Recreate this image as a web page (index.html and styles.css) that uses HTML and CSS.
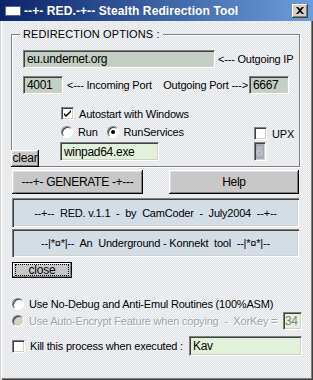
FILE: index.html
```html
<!DOCTYPE html>
<html>
<head>
<meta charset="utf-8">
<link rel="stylesheet" href="styles.css">
</head>
<body>
<div class="window">
  <div class="titlebar">
    <span class="ticon"></span>
    <span class="ttext">--+- RED.-+-- Stealth Redirection Tool</span>
    <span class="tclose"><svg width="8" height="7" viewBox="0 0 8 7"><path d="M0 0h2l2 2 2-2h2L5 3.5 8 7H6L4 5 2 7H0l3-3.5z" fill="#000"/></svg></span>
  </div>
  <div class="client">
    <div class="group">
      <span class="legend">REDIRECTION OPTIONS :</span>
      <div class="row r-ip">
        <div class="field gg ip">eu.undernet.org</div>
        <span class="lbl-ip">&lt;--- Outgoing IP</span>
      </div>
      <div class="row r-port">
        <div class="field gg port">4001</div>
        <span class="lbl-in">&lt;--- Incoming Port</span>
        <span class="lbl-out">Outgoing Port ---&gt;</span>
        <div class="field gg port port2">6667</div>
      </div>
      <div class="row r-auto">
        <span class="check"><svg width="9" height="9" viewBox="0 0 9 9"><path d="M1 4l2 2 5-5v2L3 8 1 6z" fill="#000"/></svg></span>
        <span class="ctext">Autostart with Windows</span>
      </div>
      <div class="row r-run">
        <span class="radio"></span>
        <span class="rtext">Run</span>
        <span class="radio on rs"></span>
        <span class="rtext">RunServices</span>
        <span class="upxbox"><span class="check"></span><span class="ctext">UPX</span></span>
      </div>
      <div class="row r-exe">
        <div class="field lg exe">winpad64.exe</div>
        <div class="field dis six">6</div>
      </div>
      <button class="btn clear">clear</button>
    </div>
    <div class="btnrow">
      <button class="btn big">---+- GENERATE -+---</button>
      <button class="btn big help">Help</button>
    </div>
    <div class="panel p1">--+--  RED. v.1.1  -  by  CamCoder  -  July2004  --+--</div>
    <div class="panel p2">--|*¤*|--  An  Underground - Konnekt  tool  --|*¤*|--</div>
    <button class="btn closebtn"><span class="focus">close</span></button>
    <div class="row opt1">
      <span class="radio"></span>
      <span class="otext">Use No-Debug and Anti-Emul Routines (100%ASM)</span>
    </div>
    <div class="row opt2">
      <span class="radio disr"></span>
      <span class="otext distext">Use Auto-Encrypt Feature when copying  -  XorKey =</span>
      <div class="field lg xor">34</div>
    </div>
    <div class="row opt3">
      <span class="check"></span>
      <span class="otext">Kill this process when executed :</span>
      <div class="field lg kav">Kav</div>
    </div>
  </div>
</div>
</body>
</html>
```
FILE: styles.css
```css
* { box-sizing: border-box; }
html, body { margin: 0; padding: 0; }
body {
  width: 313px; height: 380px; overflow: hidden;
  font-family: "Liberation Sans", Arial, sans-serif;
  font-size: 11px; letter-spacing: -0.2px; color: #000;
}
.window, .legend {
  background-color: #e9ecef;
  background-image: repeating-conic-gradient(#e1e5e9 0 25%, #f0f2f4 0 50%);
  background-size: 2px 2px;
  background-attachment: fixed;
}
.window {
  width: 313px; height: 380px;
  display: flex; flex-direction: column;
  box-shadow: inset 1px 0 #d4d0c8, inset 2px 0 #fff, inset -1px -1px #404040, inset -2px -2px #808080;
}
.titlebar {
  height: 21px; flex: none;
  display: flex; align-items: center;
  padding: 0 5px 0 5px;
  background: linear-gradient(to right, #0a246a, #6c9edb);
  color: #fff;
  font: bold 12px "Liberation Sans", Arial, sans-serif;
  letter-spacing: 0.1px;
}
.ticon {
  width: 16px; height: 10px; background: #fff;
  border: 1px solid #5a6a80; flex: none;
}
.ttext { margin-left: 3px; white-space: pre; }
.tclose {
  margin-left: auto; width: 16px; height: 14px;
  background: #d4d0c8;
  box-shadow: inset -1px -1px #404040, inset 1px 1px #fff, inset -2px -2px #808080;
  display: flex; align-items: center; justify-content: center;
  padding-bottom: 1px;
}
.client { padding: 0 11px 0 12px; display: flex; flex-direction: column; }
.group {
  position: relative;
  margin-top: 13px; margin-left: -1px;
  width: 289px; height: 133px;
  border: 1px solid #808080;
  box-shadow: inset 1px 1px #fff, 1px 1px #fff;
  padding: 15px 0 0 11px;
}
.legend {
  position: absolute; top: -8px; left: 8px;
  padding: 0 3px; line-height: 14px;
  letter-spacing: 0.1px; font-size: 11px;
}
.row { display: flex; align-items: center; white-space: pre; }
.field {
  height: 18px; padding-left: 3px;
  display: flex; align-items: center;
  border: 1px solid; border-color: #808080 #fff #fff #808080;
  box-shadow: inset 1px 1px #404040, inset -1px -1px #d4d0c8;
  flex: none; font-size: 12px; letter-spacing: -0.3px;
}
.gg { background: #c3cfc3; }
.lg { background: #e2f2da; }
.dis { background: #a8acb8; color: #c8ccd4; }
.r-ip { height: 18px; }
.ip { width: 192px; }
.lbl-ip { margin-left: 3px; }
.r-port { margin-top: 8px; height: 18px; padding-right: 10px; }
.port { width: 40px; }
.lbl-in { margin-left: 4px; }
.lbl-out { margin-left: auto; }
.port2 { margin-left: 1px; }
.r-auto { margin-top: 13px; margin-left: 38px; height: 13px; }
.check {
  width: 13px; height: 13px; background: #fff; flex: none;
  border: 1px solid; border-color: #808080 #fff #fff #808080;
  box-shadow: inset 1px 1px #404040, inset -1px -1px #d4d0c8;
  display: flex; align-items: center; justify-content: center;
}
.ctext { margin-left: 5px; }
.r-run { margin-top: 5px; margin-left: 38px; height: 13px; }
.radio {
  width: 12px; height: 12px; border-radius: 50%; background: #fff; flex: none;
  border: 1px solid; border-color: #808080 #fff #fff #808080;
  box-shadow: inset 1px 1px #404040;
  position: relative;
}
.radio.on::after {
  content: ""; position: absolute; left: 3px; top: 3px;
  width: 4px; height: 4px; border-radius: 50%; background: #000;
}
.radio.disr { background: #d4d0c8; }
.rtext { margin-left: 5px; }
.rs { margin-left: 9px; }
.upxbox { margin-left: auto; width: 45px; display: flex; align-items: center; margin-top: 4px; }
.r-exe { margin-top: 4px; margin-left: 37px; height: 19px; padding-right: 33px; }
.exe { width: 99px; height: 19px; }
.six { width: 12px; height: 19px; margin-left: auto; padding-left: 1px; }
.btn {
  font-family: "Liberation Sans", Arial, sans-serif; font-size: 11px; letter-spacing: -0.2px;
  background: #c8c8c8; color: #000;
  border: none; padding: 0;
  box-shadow: inset -1px -1px #000, inset 1px 1px #fff, inset -2px -2px #808080, inset 2px 2px #dcdcdc;
}
.clear {
  position: absolute; left: -1px; top: 115px;
  width: 28px; height: 17px; line-height: 15px; font-size: 12px;
}
.btnrow {
  margin-top: 3px; width: 287px;
  display: flex; justify-content: space-between;
}
.big { height: 24px; width: 131px; font-size: 12px; letter-spacing: -0.3px; }
.help { width: 130px; }
.panel {
  width: 287px; background: #d3dde6;
  display: flex; align-items: center; justify-content: center;
  white-space: pre;
  box-shadow: inset 1px 1px #808080, inset 2px 2px #404040, inset -1px -1px #fff, inset -2px -2px #d4d0c8;
}
.p1 { margin-top: 4px; height: 29px; }
.p2 { margin-top: 2px; height: 28px; }
.closebtn {
  margin-top: 5px; width: 60px; height: 16px;
  border: 1px solid #000;
  box-shadow: inset -1px -1px #808080, inset 1px 1px #fff;
  display: flex; align-items: center; justify-content: center;
  font-size: 12px;
}
.focus {
  width: 52px; height: 10px; line-height: 10px;
  outline: 1px dotted #000;
  display: block; text-align: center;
}
.otext { margin-left: 5px; }
.opt1 { margin-top: 18px; height: 16px; }
.opt2 { height: 18px; }
.distext { color: #a0a4a8; text-shadow: 1px 1px #fff; }
.xor { width: 19px; height: 18px; margin-left: auto; padding-left: 1px; color: #808080; }
.opt3 { margin-top: 6px; height: 20px; }
.kav { width: 113px; height: 20px; margin-left: auto; }
```
